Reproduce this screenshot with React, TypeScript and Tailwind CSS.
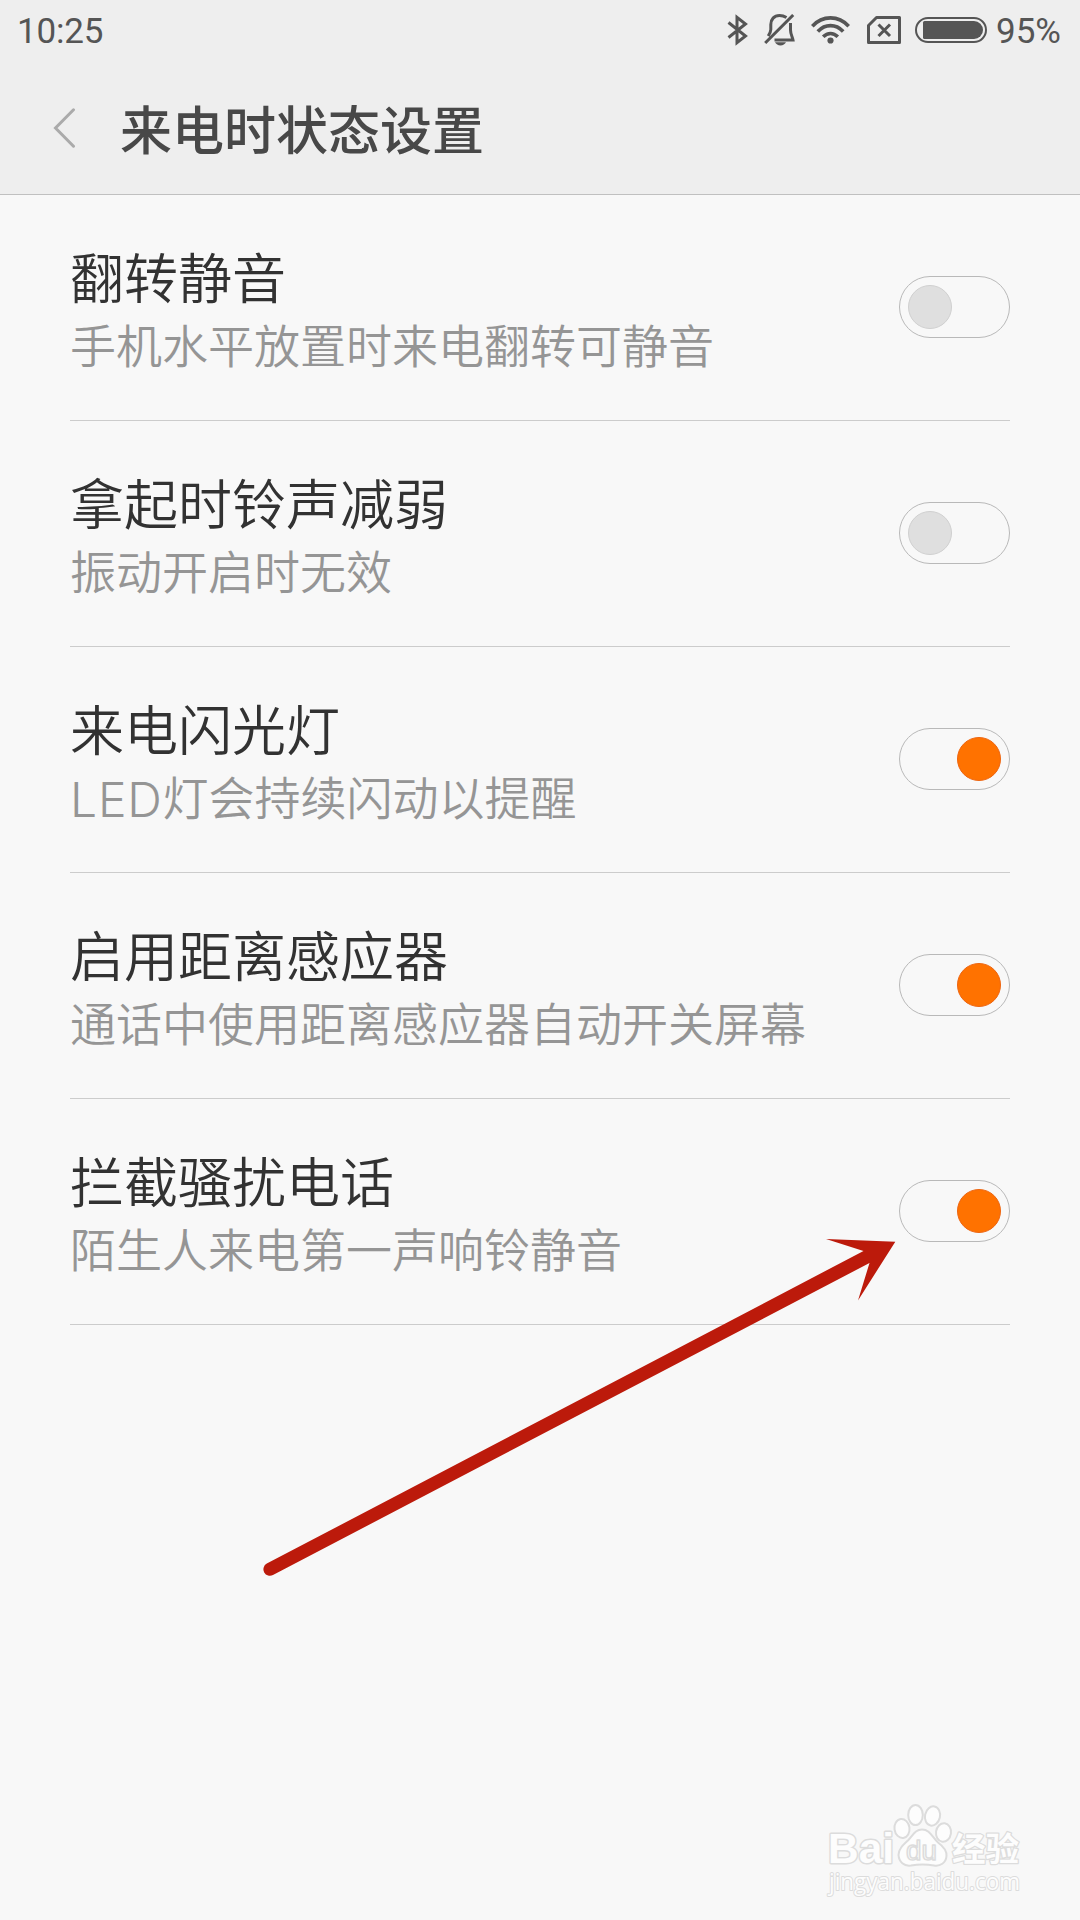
import React from 'react';

const SETTINGS = [
  { title: '翻转静音', summary: '手机水平放置时来电翻转可静音', enabled: false },
  { title: '拿起时铃声减弱', summary: '振动开启时无效', enabled: false },
  { title: '来电闪光灯', latin: 'LED', summary: '灯会持续闪动以提醒', enabled: true },
  { title: '启用距离感应器', summary: '通话中使用距离感应器自动开关屏幕', enabled: true },
  { title: '拦截骚扰电话', summary: '陌生人来电第一声响铃静音', enabled: true },
];

function StatusBar() {
  return (
    <div className="flex h-[60px] items-center justify-between pl-[17px] pr-[18px] font-['Roboto',sans-serif] text-[35px] leading-none text-[#555555]">
      <span className="pt-[2px] tracking-[-0.2px]">10:25</span>
      <div className="flex items-center">
        {/* Bluetooth */}
        <svg width="22" height="32" viewBox="0 0 22 32" fill="none" stroke="currentColor" strokeWidth="3" className="mr-[15px]">
          <path d="M1.5 8.5 18.5 22 10 28.7V3.3L18.5 10 1.5 23.5" />
        </svg>
        {/* Muted bell */}
        <svg width="31" height="32" viewBox="0 0 31 32" fill="none" stroke="currentColor" strokeWidth="3" className="mr-[16px]">
          <path d="M1.2 29 29.2 1M22.5 3.5C20 2 17.5 1.5 15.5 1.5 10 1.5 6.8 5.5 6.8 10.5V15.5C6.8 18 5.5 20 4.2 22M26.5 9V16C26.5 20 28.5 23 29 26H10.5" />
          <path d="M11 28.3h11c-1 1.9-3 3.2-5.5 3.2s-4.5-1.3-5.5-3.2z" fill="currentColor" stroke="none" />
        </svg>
        {/* Wi-Fi */}
        <svg width="39" height="30" viewBox="0 0 39 30" fill="none" stroke="currentColor" strokeWidth="3.6" className="mr-[17px]">
          <path d="M1.3 11.2C11.5 .1 27.5 .1 37.7 11.2M6.8 16.5C14.2 8.6 24.8 8.6 32.2 16.5M12.2 21.8C16.6 17.3 22.4 17.3 26.8 21.8" />
          <circle cx="19.5" cy="25.5" r="3.1" fill="currentColor" stroke="none" />
        </svg>
        {/* Missing SIM */}
        <svg width="34" height="28" viewBox="0 0 34 28" fill="none" stroke="currentColor" strokeWidth="3" className="mr-[14px]">
          <path d="M9.5 1.5H32.5V26.5H1.5V9.5z" strokeLinejoin="round" />
          <path d="M11.5 8.5 23 20M23 8.5 11.5 20" />
        </svg>
        {/* Battery */}
        <svg width="72" height="26" viewBox="0 0 72 26" className="mr-[9px]">
          <rect x="1" y="1" width="70" height="24" rx="12" fill="none" stroke="currentColor" strokeWidth="2" />
          <path d="M9.5 4H59a9 9 0 0 1 0 18H9.5A1.5 1.5 0 0 1 8 20.5V5.5A1.5 1.5 0 0 1 9.5 4z" fill="currentColor" />
        </svg>
        <span className="w-[66px] whitespace-nowrap pt-[2px]">95%</span>
      </div>
    </div>
  );
}

function Switch({ enabled }: { enabled: boolean }) {
  return (
    <span
      role="switch"
      aria-checked={enabled}
      className={`mb-[2px] flex h-[62px] w-[111px] shrink-0 items-center rounded-full border border-[#b9b9b9] px-2 ${enabled ? 'justify-end' : 'justify-start'}`}
    >
      <span className={`size-11 rounded-full border ${enabled ? 'border-[#ee6510] bg-[#ff7200]' : 'border-[#d0d0d0] bg-[#dfdfdf]'}`} />
    </span>
  );
}

function Arrow() {
  return (
    <svg className="pointer-events-none absolute left-[260px] top-[1230px]" width="640" height="350" viewBox="260 1230 640 350" fill="#bc1a0b">
      <path d="M266.8 1563.6 863.5 1251 826 1239 895.3 1241.7 858 1300.5 869.5 1263 273 1575a6.4 6.4 0 0 1-6.2-11.4z" />
    </svg>
  );
}

function Watermark() {
  return (
    <svg
      className="pointer-events-none absolute left-[820px] top-[1795px]"
      width="210"
      height="110"
      viewBox="820 1795 210 110"
      fill="#fdfdfd"
      stroke="#dcdcdc"
      strokeWidth="2"
      strokeLinejoin="round"
    >
      <text x="828" y="1863" textLength="66" lengthAdjust="spacingAndGlyphs" className="font-['Liberation_Sans',sans-serif] text-[43px] font-bold [paint-order:stroke]" strokeWidth="3">Bai</text>
      <ellipse cx="902" cy="1828.5" rx="7.5" ry="9.5" transform="rotate(-8 902 1828.5)" />
      <ellipse cx="915.5" cy="1815" rx="7.3" ry="10" />
      <ellipse cx="932.5" cy="1816" rx="7.5" ry="9.7" transform="rotate(12 932.5 1816)" />
      <ellipse cx="943.5" cy="1832.5" rx="7.5" ry="9.3" transform="rotate(8 943.5 1832.5)" />
      <path d="M922 1829.5C930 1829.5 932 1837 938 1842.5 944 1847 947 1851 946.5 1856 946 1863 940 1866.5 934 1865.5 926 1864 919 1864 911 1865.5 904 1866.5 899 1862 898.5 1855 898.5 1849 903 1845 908 1840.5 913 1835.5 915 1829.5 922 1829.5z" />
      <text x="906" y="1860" textLength="31" lengthAdjust="spacingAndGlyphs" className="font-['Liberation_Sans',sans-serif] text-[27px]" strokeWidth="1.5">du</text>
      <text x="952" y="1861" textLength="67" lengthAdjust="spacingAndGlyphs" className="font-['Noto_Sans_CJK_SC',sans-serif] text-[33px] font-bold [paint-order:stroke]" strokeWidth="2.5">经验</text>
      <text x="829" y="1890" textLength="191" lengthAdjust="spacingAndGlyphs" className="font-['Open_Sans',sans-serif] text-[23px] [paint-order:stroke]">jingyan.baidu.com</text>
    </svg>
  );
}

export default function App() {
  return (
    <div className="relative h-[1920px] w-[1080px] overflow-hidden bg-[#f8f8f8] font-['Noto_Sans_CJK_SC',sans-serif]">
      <header className="h-[195px] border-b border-[#c0c0c0] bg-[#eeeeee]">
        <StatusBar />
        <div className="flex h-[134px] items-center pl-[53px] pt-[2px]">
          <svg width="23" height="40" viewBox="0 0 23 40" fill="none" stroke="#aaaaaa" strokeWidth="3" strokeLinecap="round">
            <path d="M20.5 1.8 2.5 20 20.5 38.2" />
          </svg>
          <h1 className="ml-[44px] text-[52px] font-medium leading-none text-[#484848]">来电时状态设置</h1>
        </div>
      </header>

      <main className="px-[70px]">
        {SETTINGS.map((item) => (
          <div key={item.title} className="flex h-[226px] items-center justify-between border-b border-[#cccccc]">
            <div className="flex flex-col pt-[3px]">
              <h2 className="text-[54px] font-[350] leading-[67px] text-[#323232]">{item.title}</h2>
              <p className="flex h-[68px] items-baseline text-[46px] font-[350] leading-[68px] text-[#959595]">
                {item.latin && (
                  <span className="mb-[-2px] translate-y-[2px] font-['Inter',sans-serif] text-[48px] font-[350] leading-none tracking-[0.8px]">{item.latin}</span>
                )}
                <span>{item.summary}</span>
              </p>
            </div>
            <Switch enabled={item.enabled} />
          </div>
        ))}
      </main>

      <Arrow />
      <Watermark />
    </div>
  );
}
